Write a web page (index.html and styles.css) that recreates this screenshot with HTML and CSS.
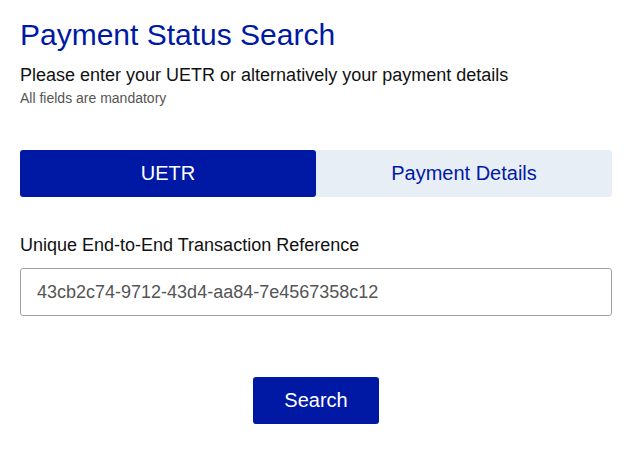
FILE: index.html
```html
<!DOCTYPE html>
<html lang="en">
<head>
<meta charset="utf-8">
<title>Payment Status Search</title>
<link rel="stylesheet" href="styles.css">
</head>
<body>
<main class="page">
  <h1 class="title">Payment Status Search</h1>
  <p class="intro">Please enter your UETR or alternatively your payment details</p>
  <p class="note">All fields are mandatory</p>
  <div class="tabs">
    <button class="tab tab-active" type="button">UETR</button>
    <button class="tab" type="button">Payment Details</button>
  </div>
  <label class="label" for="uetr">Unique End-to-End Transaction Reference</label>
  <input class="input" id="uetr" type="text" value="43cb2c74-9712-43d4-aa84-7e4567358c12">
  <div class="actions">
    <button class="search" type="button">Search</button>
  </div>
</main>
</body>
</html>
```
FILE: styles.css
```css
* { box-sizing: border-box; }
html, body { margin: 0; padding: 0; background: #fff; }
body { font-family: "Liberation Sans", Arial, sans-serif; color: #111; }
.page { padding: 17px 20px 0 20px; display: flex; flex-direction: column; }
.title { margin: 0; font-size: 30px; font-weight: normal; color: #0019a5; line-height: 36px; }
.intro { margin: 11px 0 0 0; font-size: 18px; line-height: 22px; color: #111; }
.note { margin: 4px 0 0 0; font-size: 14px; line-height: 16px; color: #555; }
.tabs { display: flex; margin-top: 44px; height: 47px; }
.tab { flex: 1; border: none; margin: 0; font-family: inherit; font-size: 20px; background: #e8eef6; color: #0019a5; border-radius: 0 3px 3px 0; }
.tab-active { background: #0019a5; color: #fff; border-radius: 3px; }
.label { margin-top: 37px; font-size: 18px; line-height: 22px; color: #111; }
.input { margin-top: 12px; height: 48px; width: 100%; border: 1px solid #a0a0a0; border-radius: 3px; padding: 0 16px; font-family: inherit; font-size: 18px; color: #555; }
.actions { display: flex; justify-content: center; margin-top: 61px; }
.search { width: 126px; height: 47px; border: none; border-radius: 3px; background: #0019a5; color: #fff; font-family: inherit; font-size: 20px; }
```
